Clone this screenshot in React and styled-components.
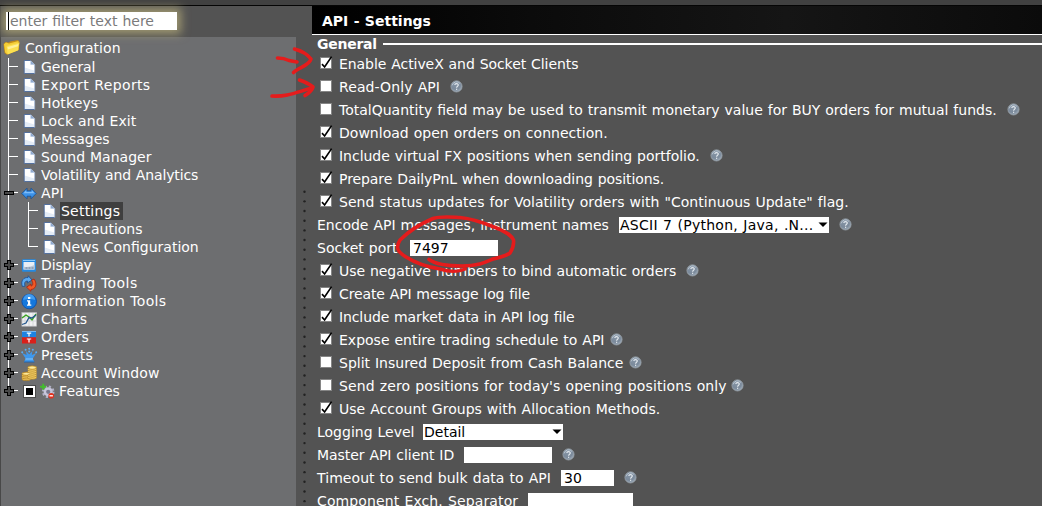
import React from "react";
import styled, { createGlobalStyle } from "styled-components";

const GlobalStyle = createGlobalStyle`
  * { box-sizing: border-box; }
  body {
    margin: 0;
    background: #535353;
    overflow: hidden;
    font-family: Verdana, "DejaVu Sans", sans-serif;
    font-size: 14px;
    word-spacing: 0.5px;
    color: #fff;
  }
`;

const Window = styled.div`
  position: relative;
  width: 1042px;
  height: 506px;
  overflow: hidden;
  display: flex;
  flex-direction: column;
  background: #535353;
`;

const TopBar = styled.div`
  flex: none;
  height: 6px;
  background: #414141;
  border-bottom: 1px solid #050505;
`;

const Body = styled.div`
  flex: 1;
  min-height: 0;
  display: flex;
`;

const Sidebar = styled.aside`
  flex: none;
  width: 296px;
  border-left: 1px solid #484848;
  display: flex;
  flex-direction: column;
`;

const FilterBar = styled.div`
  flex: none;
  height: 31px;
  padding: 6px 0 0 5px;
`;

const FilterInput = styled.div`
  position: relative;
  width: 171px;
  height: 18px;
  padding-left: 2px;
  display: flex;
  align-items: center;
  gap: 1px;
  background: #fff;
  color: #7b7b7b;
  line-height: 18px;
  white-space: nowrap;
  box-shadow: 0 0 10px 4px rgba(206, 196, 132, 0.62);
`;

const Caret = styled.span`
  width: 1px;
  height: 18px;
  background: #000;
`;

const Tree = styled.div`
  flex: 1;
  background: #6d6e70;
`;

const TreeRoot = styled.div`
  height: 21px;
  padding-left: 2px;
  display: flex;
  align-items: center;
  gap: 4px;
  white-space: nowrap;
`;

const TreeRow = styled.div`
  height: 18px;
  display: flex;
  align-items: center;
  white-space: nowrap;
`;

const IconCell = styled.span`
  flex: none;
  width: ${(p) => p.$w}px;
  height: 18px;
  display: flex;
  align-items: center;
`;

const TreeText = styled.span`
  height: 18px;
  line-height: 18px;
  letter-spacing: ${(p) => p.$ls || 0}px;
  ${(p) => p.$selected && "background: #3f3f3f; padding-right: 3px; margin-left: -1px; padding-left: 1px;"}
`;

const MixedBox = styled.span`
  flex: none;
  width: 11px;
  height: 11px;
  margin: 0 5px 0 3px;
  border: 1px solid #fff;
  outline: 1px solid #4a4a4a;
  background: #000;
  box-shadow: inset 0 0 0 1px #fff;
`;

const Splitter = styled.div`
  flex: none;
  width: 16px;
  padding: 184px 0 0 7px;
`;

const Main = styled.main`
  flex: 1;
  min-width: 0;
`;

const Header = styled.header`
  height: 29px;
  padding: 1px 0 0 10px;
  line-height: 28px;
  font-weight: bold;
  background: linear-gradient(90deg, #000, #0b0b0b 30%, #151515 65%, #0b0b0b);
  border-bottom: 1px solid #fff;
`;

const SectionTitle = styled.div`
  height: 17px;
  padding-left: 5px;
  display: flex;
  align-items: center;
  gap: 6px;
  font-weight: bold;
  letter-spacing: -0.25px;
  &::after {
    content: "";
    flex: 1;
    height: 2px;
    background: #fff;
  }
`;

const SettingRow = styled.div`
  height: 23px;
  padding-left: ${(p) => (p.$check ? 8 : 5)}px;
  display: flex;
  align-items: center;
  white-space: nowrap;
`;

const CheckFrame = styled.span`
  position: relative;
  flex: none;
  width: 12px;
  height: 12px;
  margin: -1px 7px 0 0;
  background: #fff;
  border: 1px solid #858585;
  svg { position: absolute; left: -1px; top: -3px; overflow: visible; }
`;

const Label = styled.span`
  flex: none;
  width: ${(p) => (p.$w ? `${p.$w}px` : "auto")};
  line-height: 22px;
  padding-top: 1px;
  letter-spacing: ${(p) => p.$ls || 0}px;
`;

const Field = styled.span`
  flex: none;
  width: ${(p) => p.$w}px;
  height: 16px;
  margin-right: ${(p) => p.$gap || 0}px;
  padding-left: ${(p) => (p.$select ? 1 : 3)}px;
  display: flex;
  align-items: center;
  justify-content: space-between;
  background: #fff;
  color: #000;
  line-height: 16px;
  letter-spacing: ${(p) => p.$ls || 0}px;
`;

const Marks = styled.svg`
  position: absolute;
  left: 0;
  top: 0;
  pointer-events: none;
`;

const Checkbox = ({ checked }) => (
  <CheckFrame>
    {checked && (
      <svg width="13" height="14" viewBox="0 0 13 14">
        <path d="M2 9.2 L4.6 12 L11.6 1.6" fill="none" stroke="#000" strokeWidth="1.7" />
      </svg>
    )}
  </CheckFrame>
);

const Help = () => (
  <svg width="13" height="13" viewBox="0 0 13 13">
    <defs>
      <radialGradient id="help" cx="42%" cy="35%" r="70%">
        <stop offset="0" stopColor="#8493a4" />
        <stop offset="0.6" stopColor="#7b8a9b" />
        <stop offset="1" stopColor="#a7b4c0" />
      </radialGradient>
    </defs>
    <circle cx="6.5" cy="6.4" r="5.6" fill="url(#help)" stroke="#979fa7" strokeWidth="0.8" />
    <path d="M2.2 5.4 A4.5 4.5 0 0 1 10.2 3.6" fill="none" stroke="#b9c6d2" strokeWidth="1" />
    <path d="M4.8 5.1 C4.8 3.1 8.3 3.1 8.3 5 C8.3 6.3 6.6 6.2 6.6 7.8" fill="none" stroke="#e3e9ee" strokeWidth="1.15" />
    <rect x="6" y="8.7" width="1.2" height="1.2" fill="#e3e9ee" />
  </svg>
);

const Arrow = () => (
  <svg width="11" height="6" viewBox="0 0 11 6">
    <path d="M0.5 0.5 H9.5 L5 5 Z" fill="#000" />
  </svg>
);

const Dots = () => (
  <svg width="3" height="320" viewBox="0 0 3 320">
    {Array.from({ length: 33 }, (_, i) => (
      <circle key={i} cx="1.5" cy={1.7 + i * 9.67} r="1.2" fill="#222" />
    ))}
  </svg>
);

/* Connector lines in front of a tree entry: outer trunk, stub and expander. */
const Guide = ({ kind, last }) => (
  <svg width="20" height="18" viewBox="0 0 20 18" shapeRendering="crispEdges">
    <rect x="7" y="0" width="1" height={last ? 9 : 18} fill="#fff" />
    {kind !== "trunk" && <rect x="8" y="8" width="9" height="1" fill="#fff" />}
    {kind === "plus" && (
      <path d="M6 4 h4 v3 h3 v4 h-3 v3 h-4 v-3 h-3 v-4 h3 z" fill="#000" />
    )}
    {kind === "plus" && <path d="M7 5 h2 v3 h3 v2 h-3 v3 h-2 v-3 h-3 v-2 h3 z" fill="#484848" />}
    {kind === "minus" && <rect x="3" y="7" width="10" height="4" fill="#000" />}
    {kind === "minus" && <rect x="4" y="8" width="8" height="2" fill="#484848" />}
  </svg>
);

const ChildGuide = ({ last }) => (
  <svg width="20" height="18" viewBox="0 0 20 18" shapeRendering="crispEdges">
    <rect x="7" y="0" width="1" height={last ? 9 : 18} fill="#fff" />
    <rect x="8" y="8" width="9" height="1" fill="#fff" />
  </svg>
);

const icons = {
  doc: (
    <g transform="translate(0.7 -0.5)">
      <path d="M2.5 2 H9 L13 6 V15 H2.5 Z" fill="#e4ecf6" />
      <path d="M3 2.5 H8.5 V6.5 H12.5 V12 L3 9 Z" fill="#fff" />
      <path d="M2.5 15 V2 H9 M2.5 15 H13" fill="none" stroke="#4b6a9d" strokeWidth="0.9" />
      <path d="M9 2 V6 H13 Z" fill="#8fa9cf" />
      <path d="M13 6 V15" stroke="#9db3d2" strokeWidth="0.7" />
    </g>
  ),
  api: (
    <>
      <path d="M0.8 8.5 L6 3.2 V5.8 H10 V3.2 L15.2 8.5 L10 13.8 V11.2 H6 V13.8 Z" fill="#3c92e8" stroke="#174f92" strokeWidth="0.8" />
      <path d="M2.4 8.3 L5.2 5.3 V7.1 H10.8 V5.3 L13.6 8.3 Z" fill="#7fbdf8" />
    </>
  ),
  display: (
    <>
      <rect x="1" y="2.3" width="14" height="12.4" rx="1" fill="#2689de" />
      <rect x="2.5" y="5" width="11" height="7.5" fill="#e9eff5" />
      <path d="M2.5 9.5 Q7.5 11 13.5 8 V12.5 H2.5 Z" fill="#b9c8d8" />
      <path d="M4.5 11 h2 M7.5 11 h2 M10.5 11 h2" stroke="#6a7f99" />
      <path d="M2 3.5 H14" stroke="#8bc8f7" />
    </>
  ),
  trading: (
    <>
      <path d="M1.4 11.5 C-0.8 5.5 3 2 7 2.6 L7.3 0.8 L11 5 L6.2 8 L6.5 6 C4 5.8 3 8 4 11.2 Z" fill="#5ba9ee" stroke="#184b92" strokeWidth="0.8" />
      <path d="M13 4 C17.2 9.5 14 14.5 10 14.4 L9.8 16.2 L5.6 12.2 L10 9 L9.9 11 C12 11 12.5 8 10.6 5.2 Z" fill="#f25a26" stroke="#ad1f0a" strokeWidth="0.8" />
    </>
  ),
  info: (
    <>
      <circle cx="8.2" cy="8.5" r="7.3" fill="#1477dc" stroke="#0c4faa" strokeWidth="0.9" />
      <path d="M2.2 7 A6 6 0 0 1 14.2 7 Q8 5 2.2 7 Z" fill="#419cf0" />
      <rect x="7" y="4" width="2.3" height="2" fill="#fff" />
      <path d="M6 7.2 H9.2 V11.5 H10.3 V12.8 H6 V11.5 H7 V8.4 H6 Z" fill="#fff" />
    </>
  ),
  charts: (
    <>
      <rect x="0.9" y="1.6" width="14.6" height="13.6" fill="#f0f0f2" stroke="#b9b9bd" strokeWidth="0.7" />
      <path d="M4 2 V15 M8 2 V15 M12 2 V15 M1 6 H15 M1 10 H15" stroke="#c8cbd0" strokeWidth="0.7" />
      <path d="M1 7 L5 4 L8 6 L11 9 L15 3" fill="none" stroke="#37a51e" strokeWidth="1.4" />
      <path d="M1 13.5 L5 12 L8 6.5 L11 7 L15 4" fill="none" stroke="#26588e" strokeWidth="1.3" />
    </>
  ),
  orders: (
    <>
      <rect x="1" y="2" width="14" height="6.3" fill="#1d83e2" />
      <rect x="1" y="8.3" width="14" height="6.2" fill="#d9201a" />
      <path d="M1 2.5 H15" stroke="#74b8f3" />
      <path d="M5.8 4.2 H10.2 M8 4.2 V7.4 M5.8 10 H10.2 M8 10 V13.4" stroke="#fff" strokeWidth="1.2" />
    </>
  ),
  presets: (
    <>
      <path d="M4.6 11.5 L1 6 L5.6 8 L5 4 L8.2 7.2 L11.4 4 L10.8 8 L15.4 6 L11.8 11.5 L13.4 15 H3 Z" fill="#3f98ec" />
      <path d="M4.4 12 H12" stroke="#8ac8fb" />
      <path d="M3 15 H13.4" stroke="#2063ad" />
      {[[1.2, 5.3], [4.6, 2.8], [8.2, 4.4], [8.2, 1.7], [11.8, 2.8], [15.2, 5.3]].map(([x, y]) => (
        <circle key={`${x}-${y}`} cx={x} cy={y} r="1" fill="#5aaef5" />
      ))}
    </>
  ),
  account: (
    <>
      {[13.9, 12.2, 10.4, 8.8].map((y) => (
        <ellipse key={y} cx="5.3" cy={y} rx="4.5" ry="1.7" fill="#edc45b" stroke="#a87617" strokeWidth="0.6" />
      ))}
      {[12.4, 10.4, 8.4, 6.4, 4.4, 2.6].map((y) => (
        <ellipse key={y} cx="11.2" cy={y} rx="4.5" ry="1.8" fill="#f3d068" stroke="#a87617" strokeWidth="0.6" />
      ))}
      <ellipse cx="11.2" cy="2.6" rx="3" ry="0.9" fill="#fbe9a0" />
      <ellipse cx="5.3" cy="8.8" rx="3" ry="0.8" fill="#fbe9a0" />
    </>
  ),
  features: (
    <>
      <circle cx="8.2" cy="8.8" r="5.3" fill="none" stroke="#b3b2c9" strokeWidth="2" strokeDasharray="2.2 1.96" />
      <circle cx="8.2" cy="8.8" r="4.6" fill="#c6c5da" />
      <circle cx="8.2" cy="8.8" r="2.1" fill="#77778c" />
      <path d="M0.2 3.8 H6.2 M3.2 0.8 V6.8" stroke="#42bd2c" strokeWidth="1.9" />
      <circle cx="11.2" cy="12.8" r="2.8" fill="#e3301d" />
      <path d="M9.5 12.8 H12.9" stroke="#fff" strokeWidth="1.3" />
    </>
  ),
};

const Icon = ({ name }) => (
  <svg width="17" height="17" viewBox="0 0 17 17">{icons[name]}</svg>
);

const Folder = () => (
  <svg width="18" height="17" viewBox="0 0 18 17">
    <path d="M0.5 5 L2.5 3 L6 3.5 L7 2.5 L15 1 L16.5 3 L15.8 11 L4 15.8 L1.6 14 Z" fill="#c58e15" />
    <path d="M1 5.2 L3 3.5 L6 4.6 L15.5 2 V11 L4 15 L2.2 13.6 Z" fill="#f4cf38" />
    <path d="M3.6 7 L16.5 3.5 L14.8 11.5 L4.6 15.5 Z" fill="#fbe050" />
    <path d="M4.4 8 L15.4 5 L15 7.2 L5 10.5 Z" fill="#fff09a" />
  </svg>
);

const treeItems = [
  { text: "General", icon: "doc", ls: -0.12 },
  { text: "Export Reports", icon: "doc", ls: 0.36 },
  { text: "Hotkeys", icon: "doc", ls: 0.12 },
  { text: "Lock and Exit", icon: "doc", ls: 0.05 },
  { text: "Messages", icon: "doc" },
  { text: "Sound Manager", icon: "doc" },
  { text: "Volatility and Analytics", icon: "doc", ls: -0.13 },
  { text: "API", icon: "api", kind: "minus", ls: 0.2 },
  { text: "Settings", icon: "doc", child: true, selected: true, ls: 0.22 },
  { text: "Precautions", icon: "doc", child: true },
  { text: "News Configuration", icon: "doc", child: true, last: true },
  { text: "Display", icon: "display", kind: "plus", ls: -0.12 },
  { text: "Trading Tools", icon: "trading", kind: "plus", ls: 0.45 },
  { text: "Information Tools", icon: "info", kind: "plus", ls: 0.28 },
  { text: "Charts", icon: "charts", kind: "plus", ls: 0.08 },
  { text: "Orders", icon: "orders", kind: "plus", ls: 0.15 },
  { text: "Presets", icon: "presets", kind: "plus", ls: 0.13 },
  { text: "Account Window", icon: "account", kind: "plus", ls: 0.13 },
  { text: "Features", icon: "features", kind: "plus", mixed: true, last: true, ls: 0.1 },
];

const settings = [
  { check: true, on: true, text: "Enable ActiveX and Socket Clients", ls: -0.06 },
  { check: true, text: "Read-Only API", w: 111, help: true, ls: 0.1 },
  { check: true, text: "TotalQuantity field may be used to transmit monetary value for BUY orders for mutual funds.", w: 668, help: true },
  { check: true, on: true, text: "Download open orders on connection.", ls: 0.02 },
  { check: true, on: true, text: "Include virtual FX positions when sending portfolio.", w: 371, help: true, ls: -0.02 },
  { check: true, on: true, text: "Prepare DailyPnL when downloading positions.", ls: -0.07 },
  { check: true, on: true, text: "Send status updates for Volatility orders with \"Continuous Update\" flag.", ls: 0.04 },
  { text: "Encode API messages, instrument names", w: 302, select: "ASCII 7 (Python, Java, .N...", fieldW: 210, fieldLs: 0.27, gap: 10, help: true },
  { text: "Socket port", w: 93, value: "7497", fieldW: 88 },
  { check: true, on: true, text: "Use negative numbers to bind automatic orders", w: 347, help: true, ls: -0.04 },
  { check: true, on: true, text: "Create API message log file", ls: -0.11 },
  { check: true, on: true, text: "Include market data in API log file", ls: -0.11 },
  { check: true, on: true, text: "Expose entire trading schedule to API", w: 271, help: true },
  { check: true, text: "Split Insured Deposit from Cash Balance", w: 290, help: true },
  { check: true, text: "Send zero positions for today's opening positions only", w: 392, help: true, ls: 0.11 },
  { check: true, on: true, text: "Use Account Groups with Allocation Methods.", ls: 0.02 },
  { text: "Logging Level", w: 106, select: "Detail", fieldW: 140 },
  { text: "Master API client ID", w: 147, value: "", fieldW: 88, gap: 10, help: true, ls: -0.05 },
  { text: "Timeout to send bulk data to API", w: 244, value: "30", fieldW: 53, gap: 10, help: true, ls: 0.06 },
  { text: "Component Exch. Separator", w: 211, value: "", fieldW: 105, ls: 0.12 },
];

export default function App() {
  return (
    <>
      <GlobalStyle />
      <Window>
        <TopBar />
        <Body>
          <Sidebar>
            <FilterBar>
              <FilterInput>
                <Caret />
                enter filter text here
              </FilterInput>
            </FilterBar>
            <Tree>
              <TreeRoot>
                <Folder />
                <TreeText $ls={0.05}>Configuration</TreeText>
              </TreeRoot>
              {treeItems.map((t) => (
                <TreeRow key={t.text}>
                  <Guide kind={t.child ? "trunk" : t.kind || "leaf"} last={t.last && !t.child} />
                  {t.child && <ChildGuide last={t.last} />}
                  {t.mixed && <MixedBox />}
                  <IconCell $w={t.mixed ? 19 : 20}>
                    <Icon name={t.icon} />
                  </IconCell>
                  <TreeText $selected={t.selected} $ls={t.ls}>{t.text}</TreeText>
                </TreeRow>
              ))}
            </Tree>
          </Sidebar>
          <Splitter>
            <Dots />
          </Splitter>
          <Main>
            <Header>API - Settings</Header>
            <SectionTitle>General</SectionTitle>
            {settings.map((s) => (
              <SettingRow key={s.text} $check={s.check}>
                {s.check && <Checkbox checked={s.on} />}
                <Label $w={s.w} $ls={s.ls}>{s.text}</Label>
                {s.fieldW && (
                  <Field $w={s.fieldW} $gap={s.gap} $ls={s.fieldLs} $select={Boolean(s.select)}>
                    {s.select || s.value}
                    {s.select && <Arrow />}
                  </Field>
                )}
                {s.help && <Help />}
              </SettingRow>
            ))}
          </Main>
        </Body>
        <Marks width="1042" height="506" viewBox="0 0 1042 506" fill="none" stroke="#e51c1c" strokeWidth="3.6" strokeLinecap="round" strokeLinejoin="round">
          <path d="M277.5 58 Q284 58 289 60.5 L297 62" />
          <path d="M294.5 49 C302 51 308 55 311 59 C309 66 299 67 293.5 72.5" />
          <path d="M272 96 C287 97 297 92 312 88" />
          <path d="M299.5 80 Q308 83 313 87 Q312 91 305 95.5" />
          <path d="M429 259.5 C434 263 446 266 462 266 C478 266 486 262 493 259 C501 257 506 256 510 253 C514 247 514 244 513.5 240 C511 234 505 232 499 229 C489 225 476 219 460 217.5 C450 217 440 216 433 218.5 C420 224 408 232 400 240 C395 248 398 252 406 257 C417 264 428 267 440 269 C449 272 459 272 465 269" />
        </Marks>
      </Window>
    </>
  );
}
